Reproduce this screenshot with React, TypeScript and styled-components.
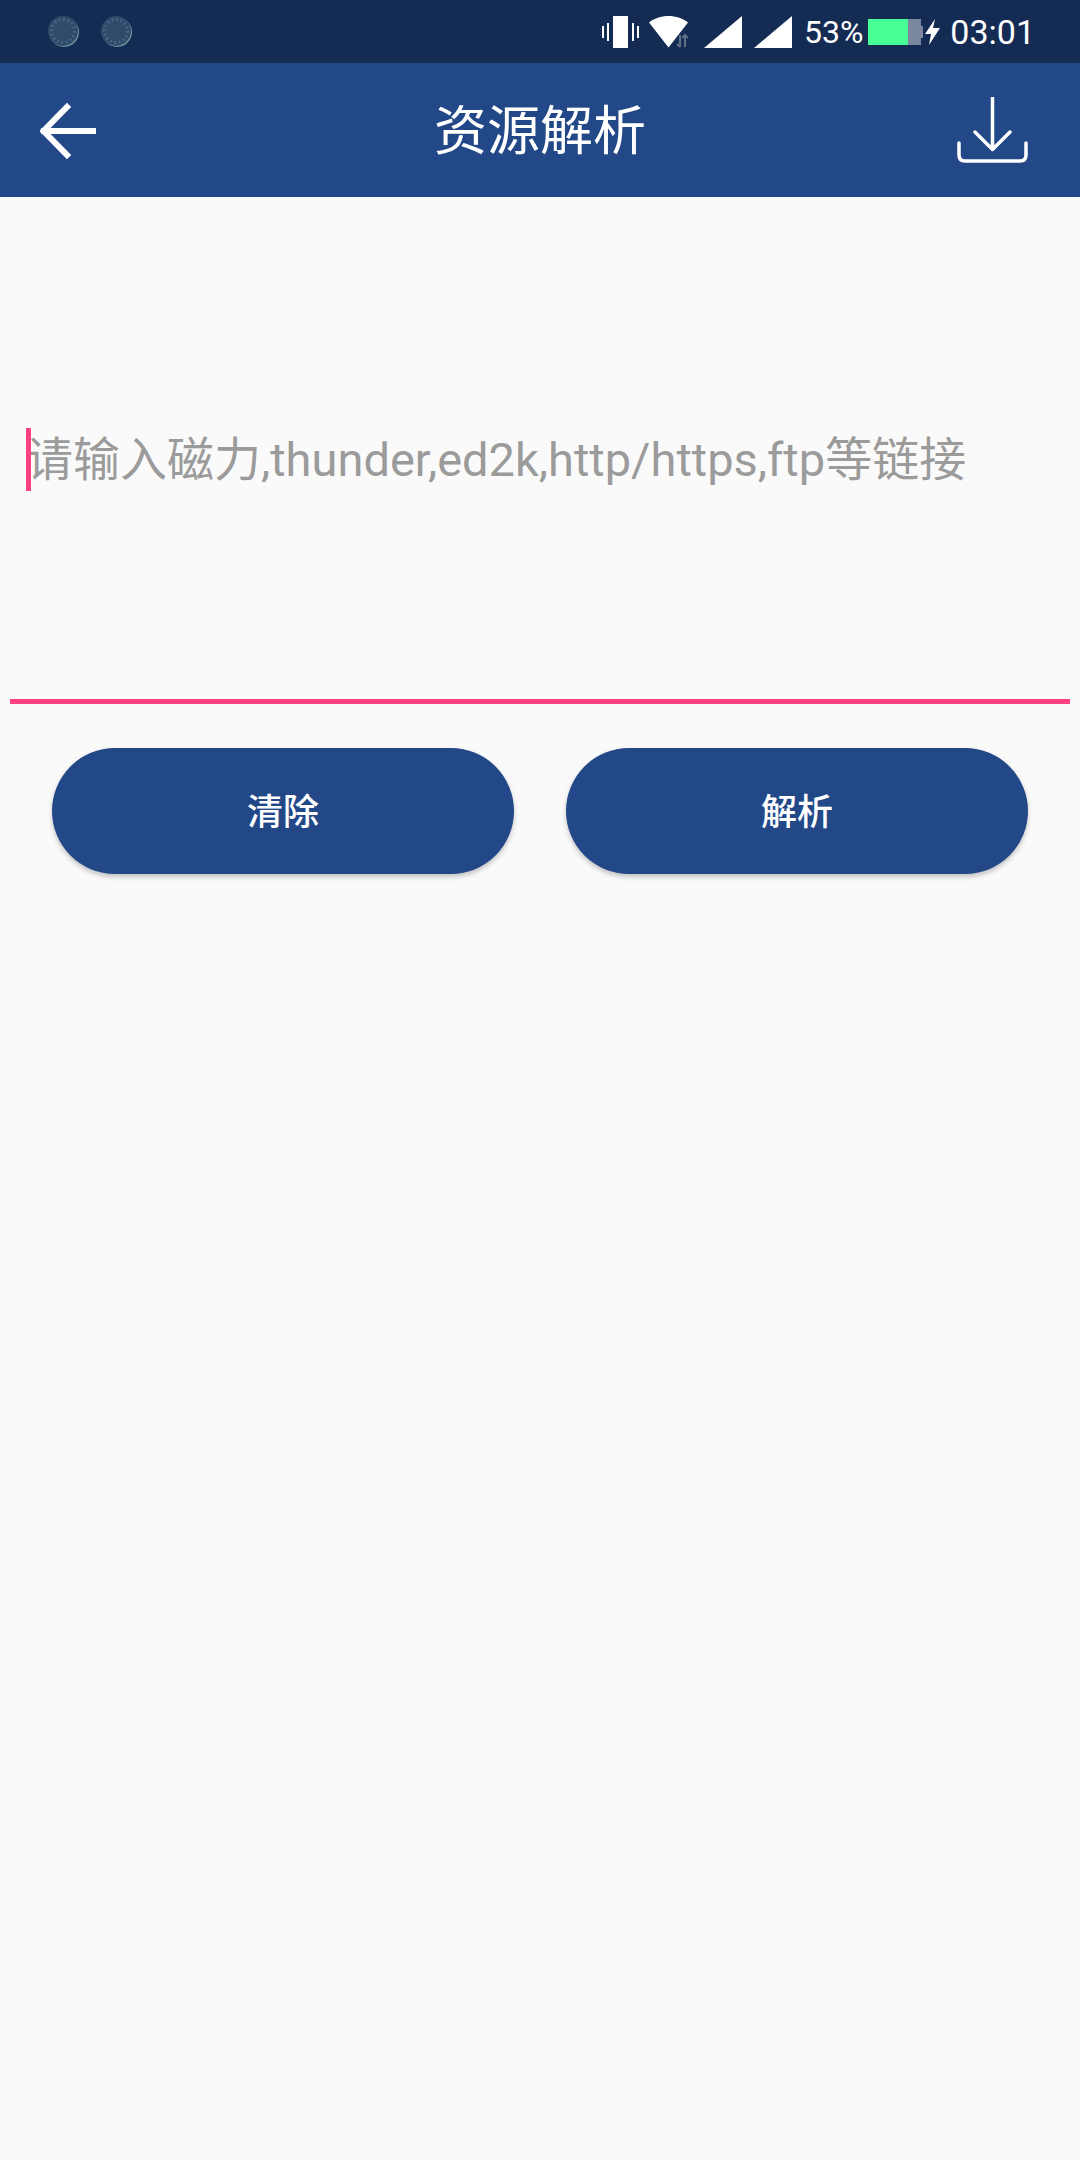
import React from "react";
import styled, { createGlobalStyle } from "styled-components";

const Global = createGlobalStyle`
  html, body { margin: 0; padding: 0; background: #fafafa; }
  * { box-sizing: border-box; }
`;

const Page = styled.div`
  width: 1080px;
  height: 2160px;
  background: #fafafa;
  display: flex;
  flex-direction: column;
  font-family: Roboto, "Noto Sans CJK SC", sans-serif;
  overflow: hidden;
`;

const StatusBar = styled.div`
  height: 63px;
  background: #142b53;
  display: flex;
  align-items: center;
  padding: 0 45px 0 48px;
`;

const Notifications = styled.div`
  display: flex;
  gap: 22px;
`;

const StatusIcons = styled.div`
  margin-left: auto;
  padding-top: 1px;
  display: flex;
  align-items: center;
  color: #fff;
`;

const IconSlot = styled.svg<{ $ml?: number }>`
  display: block;
  flex: none;
  margin-left: ${(p) => p.$ml ?? 0}px;
`;

const StatusText = styled.span<{ $ml: number; $size: number }>`
  margin-left: ${(p) => p.$ml}px;
  font-size: ${(p) => p.$size}px;
  line-height: 62px;
  font-weight: 400;
`;

const Header = styled.header`
  height: 134px;
  background: #224888;
  display: grid;
  grid-template-columns: 1fr auto 1fr;
  align-items: center;
  padding: 0 52px 0 40px;
`;

const BackSlot = styled.div`
  justify-self: start;
  margin-top: 2px;
`;

const DownloadSlot = styled.div`
  justify-self: end;
`;

const Title = styled.h1`
  margin: 4px 0 0 12px;
  font-size: 53px;
  font-weight: 400;
  color: #fff;
  line-height: 1;
`;

const Field = styled.div`
  margin: 0 10px;
  height: 507px;
  border-bottom: 5px solid #ff4081;
  padding: 231px 0 0 16px;
  position: relative;
`;

const Caret = styled.span`
  position: absolute;
  left: 16px;
  top: 231px;
  width: 5px;
  height: 63px;
  background: #ff4081;
`;

const Placeholder = styled.div`
  font-size: 47px;
  line-height: 64px;
  color: #9b9b9b;
  white-space: nowrap;
`;

const Actions = styled.div`
  display: flex;
  gap: 52px;
  padding: 44px 52px 0;
`;

const ActionButton = styled.button`
  flex: 1;
  height: 126px;
  border: 0;
  border-radius: 63px;
  padding: 0 0 4px;
  background: #224888;
  color: #fff;
  font-family: inherit;
  font-size: 36px;
  font-weight: 500;
  box-shadow: 0 3px 5px rgba(0, 0, 0, 0.22);
`;

const Dot = () => (
  <IconSlot width="31" height="31" viewBox="0 0 31 31">
    <circle cx="16" cy="16" r="15" fill="#6f9a9a" />
    <circle cx="15" cy="15" r="15" fill="#2f4a6b" />
    <circle cx="15" cy="15" r="11.5" fill="none" stroke="#4d6a85" strokeWidth="3" strokeDasharray="1.5 3" />
  </IconSlot>
);

export default function App() {
  return (
    <Page>
      <Global />
      <StatusBar>
        <Notifications>
          <Dot />
          <Dot />
        </Notifications>
        <StatusIcons>
          <IconSlot width="37" height="32" viewBox="0 0 37 32">
            <rect x="11" y="0" width="15" height="32" fill="#fff" />
            <path d="M0 10h2v12H0zM5 7h2v18H5zM30 7h2v18h-2zM35 10h2v12h-2z" fill="#fff" />
          </IconSlot>
          <IconSlot $ml={10} width="42" height="33" viewBox="0 0 42 33">
            <path d="M0 6.500C5 2.500 12 0 19.500 0S34 2.500 39 6.500L19.500 31.500z" fill="#fff" />
            <path d="M31 19v12M28 28l3 3M36 31V19M33 22l3-3 3 3" fill="none" stroke="#5f6f88" strokeWidth="2" />
          </IconSlot>
          <IconSlot $ml={13} width="38" height="32" viewBox="0 0 38 32">
            <path d="M0 32L38 0v32z" fill="#fff" />
          </IconSlot>
          <IconSlot $ml={12} width="38" height="32" viewBox="0 0 38 32">
            <path d="M0 32L38 0v32z" fill="#fff" />
          </IconSlot>
          <StatusText $ml={12} $size={32}>53%</StatusText>
          <IconSlot $ml={5} width="55" height="26" viewBox="0 0 55 26">
            <rect width="40" height="26" fill="#46ff95" />
            <rect x="40" width="13" height="26" fill="#7a879f" />
            <rect x="53" y="7" width="2" height="12" fill="#7a879f" />
          </IconSlot>
          <IconSlot $ml={2} width="15" height="26" viewBox="0 0 15 26">
            <path d="M10 0L0 15h6l-2 11 11-17H8z" fill="#fff" />
          </IconSlot>
          <StatusText $ml={10} $size={34}>03:01</StatusText>
        </StatusIcons>
      </StatusBar>
      <Header>
        <BackSlot>
          <IconSlot width="56" height="56" viewBox="0 0 56 56">
            <path d="M54 28H4M27 4L3.500 28 27 52" fill="none" stroke="#fff" strokeWidth="6" strokeLinecap="square" />
          </IconSlot>
        </BackSlot>
        <Title>资源解析</Title>
        <DownloadSlot>
          <IconSlot width="71" height="66" viewBox="0 0 71 66">
            <path d="M35.500 1v51M18 35l17.500 17.500L53 35" fill="none" stroke="#fff" strokeWidth="3.500" strokeLinecap="round" strokeLinejoin="round" />
            <path d="M2 46v12q0 6 6 6h55q6 0 6-6V46" fill="none" stroke="#fff" strokeWidth="3.500" strokeLinecap="round" />
          </IconSlot>
        </DownloadSlot>
      </Header>
      <Field>
        <Placeholder>请输入磁力,thunder,ed2k,http/https,ftp等链接</Placeholder>
        <Caret />
      </Field>
      <Actions>
        <ActionButton>清除</ActionButton>
        <ActionButton>解析</ActionButton>
      </Actions>
    </Page>
  );
}
